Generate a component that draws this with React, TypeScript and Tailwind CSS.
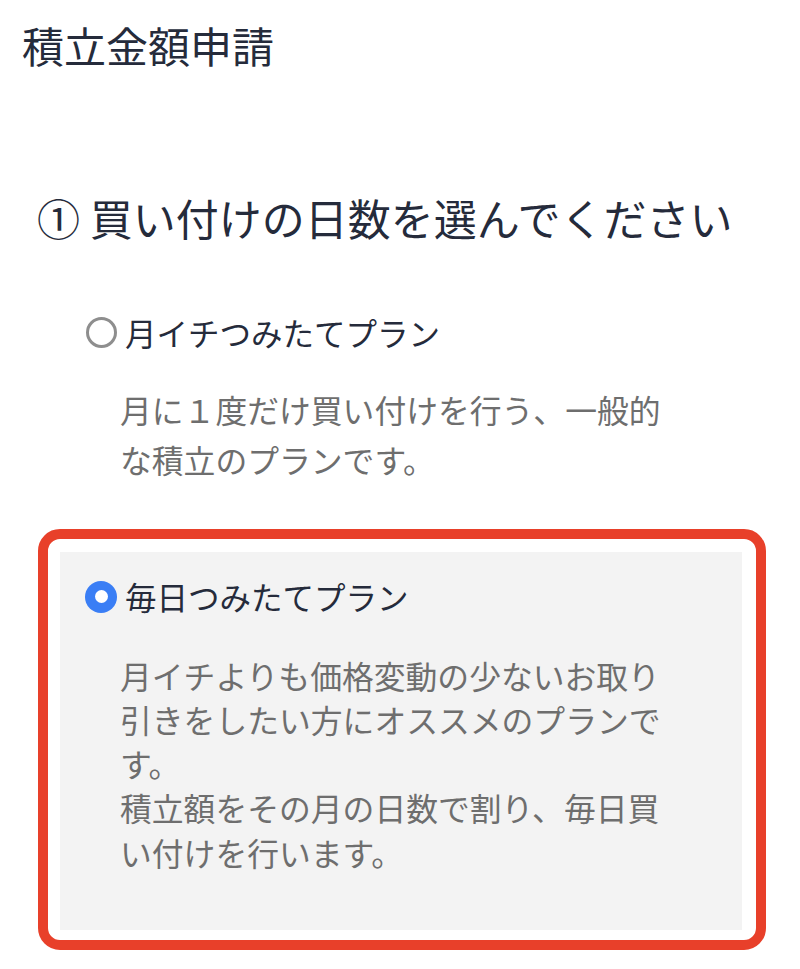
import React from "react";

export default function App() {
  return (
    <div
      className="w-[800px] h-[969px] overflow-hidden bg-white text-[#252b3b]"
      style={{ fontFamily: '"Noto Sans CJK JP", "Noto Sans", sans-serif' }}
    >
      <h1 className="pl-[22px] pt-[24px] text-[42px] leading-none font-normal">積立金額申請</h1>

      <h2 className="mt-[130px] pl-[37px] text-[43px] leading-none font-normal whitespace-nowrap">
        ① 買い付けの日数を選んでください
      </h2>

      <div className="mt-[78px] pl-[86px]">
        <label className="flex items-center gap-[8px]">
          <span className="w-[31px] h-[31px] rounded-full border-[3px] border-[#8e8e8e] bg-white shrink-0" />
          <span className="text-[31.5px] leading-none whitespace-nowrap">月イチつみたてプラン</span>
        </label>
        <p className="mt-[35px] ml-[34px] w-[560px] text-[31.8px] leading-[50px] text-[#6e6e6e]">
          月に１度だけ買い付けを行う、一般的
          <br />
          な積立のプランです。
        </p>
      </div>

      <div className="mt-[45px] ml-[38px] w-[728px] rounded-[22px] border-[10px] border-[#e8402a] pt-[13px] pl-[12px] pr-[14px] pb-[10px]">
        <div className="bg-[#f3f3f3] pt-[29px] pl-[25px] pb-[56px]">
          <label className="flex items-center gap-[8px]">
            <span className="w-[32px] h-[32px] rounded-full bg-[#3a7ef5] flex items-center justify-center shrink-0">
              <span className="w-[13px] h-[13px] rounded-full bg-white" />
            </span>
            <span className="text-[31.5px] leading-none whitespace-nowrap">毎日つみたてプラン</span>
          </label>
          <p className="mt-[40px] ml-[35px] text-[31.8px] leading-[44.3px] text-[#6e6e6e] whitespace-nowrap">
            月イチよりも価格変動の少ないお取り
            <br />
            引きをしたい方にオススメのプランで
            <br />
            す。
            <br />
            積立額をその月の日数で割り、毎日買
            <br />
            い付けを行います。
          </p>
        </div>
      </div>
    </div>
  );
}
